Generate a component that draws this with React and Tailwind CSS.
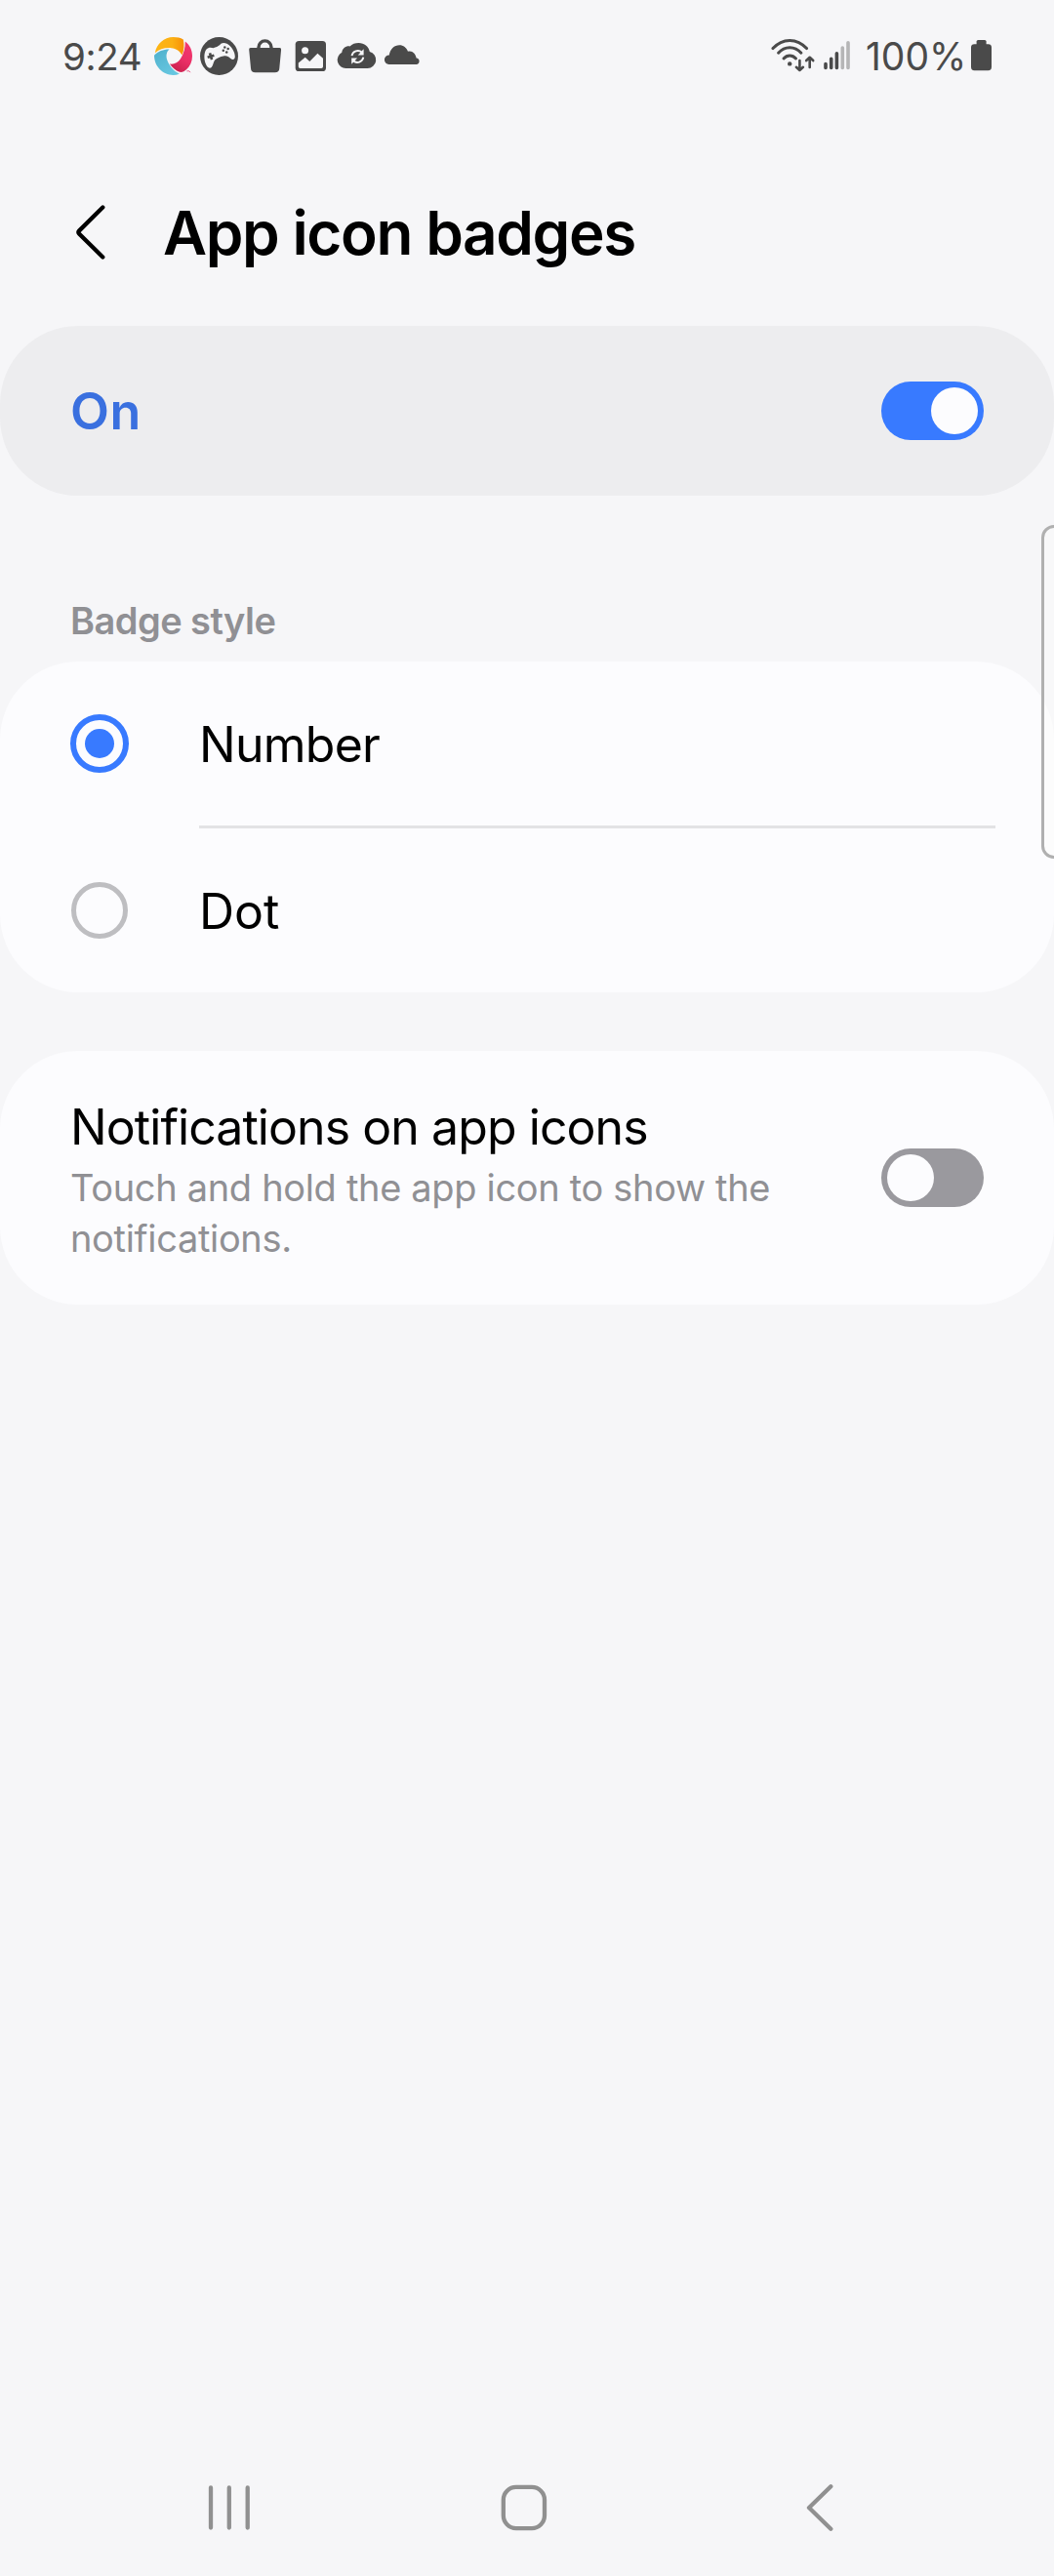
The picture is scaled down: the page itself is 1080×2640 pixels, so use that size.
import React from "react";

const INK = "#4a4a4a";
const BG = "#f6f6f8";

function StatusIcon({ children }) {
  return (
    <svg width="39" height="39" viewBox="0 0 39 39" className="block shrink-0 overflow-visible">
      {children}
    </svg>
  );
}

function Shutter() {
  return (
    <StatusIcon>
      <defs>
        <linearGradient id="sun" x1="0" x2="1">
          <stop offset="0" stopColor="#fdb515" />
          <stop offset="0.6" stopColor="#fbb014" />
          <stop offset="1" stopColor="#f79005" />
        </linearGradient>
        <linearGradient id="rose" x1="0.7" y1="0" x2="0.3" y2="1">
          <stop offset="0" stopColor="#f2386f" />
          <stop offset="0.55" stopColor="#ea2f66" />
          <stop offset="1" stopColor="#c9214e" />
        </linearGradient>
        <linearGradient id="sea" x1="0" y1="0" x2="0.6" y2="1">
          <stop offset="0" stopColor="#4fb0cc" />
          <stop offset="1" stopColor="#66c6e0" />
        </linearGradient>
      </defs>
      <path d="M0.8 16.2C2.5 7 10 0 19.5 0c4 0 7.5 0.8 10.3 2.4C31 8 30.700 13.500 28.400 18.500C26.500 14.500 22.500 11.600 17.500 11.200C11 10.700 5 12.600 0.800 16.200Z" fill="url(#sun)" />
      <path d="M31.800 4.500C36.500 8 39 13.500 39 19.500C39 25 36.800 29.800 33 33.300C31 35.200 28.500 36.300 26 35.800C22 34.500 18.500 31.500 16 27.600C20 28.300 24.200 26.600 26.800 22.600C30.200 17.300 32 11 31.800 4.500Z" fill="url(#rose)" />
      <path d="M0 18.800C4 14.600 9.500 12.400 15.500 12.500C12.700 14.800 11.800 19 13.200 23.300C15.200 29.300 19.500 34.500 25.800 37.700C23.800 38.600 21.700 39 19.500 39C8.800 39 0 30 0 18.800Z" fill="url(#sea)" />
      <path d="M33.400 34.800h2.400l1.200 1.400" stroke="#ec4b7d" strokeWidth="0.9" fill="none" />
    </StatusIcon>
  );
}

function Gamepad() {
  return (
    <StatusIcon>
      <circle cx="19.500" cy="19.500" r="19.500" fill={INK} />
      <path d="M6.500 12.500C8.500 10.200 11.500 10.600 13.500 11.200C16.500 10.600 18.200 9.700 20.300 8.100C21.500 5.800 24.500 5.400 27.500 6.800C31.800 9 35.800 15 35.800 20C35.700 23.200 33.300 23.700 31.300 21.900C28.900 19.600 27 18.700 24 19.400C20.500 20.200 17.700 21 15.400 23.200C13.500 25.300 13.600 28.500 11.900 30.800C10.300 32.700 8 31.700 6.500 29C3.900 24.200 3.500 16.200 6.500 12.500Z" fill={BG} />
      <g transform="rotate(-17 11 19.700)" fill={INK}>
        <rect x="7.500" y="18.500" width="7" height="2.600" />
        <rect x="9.700" y="16.300" width="2.600" height="7" />
      </g>
      <g fill={INK}>
        <circle cx="23.800" cy="13.800" r="1.250" />
        <circle cx="25.300" cy="10.500" r="1.250" />
        <circle cx="28.700" cy="12" r="1.250" />
        <circle cx="27.200" cy="15.400" r="1.250" />
      </g>
    </StatusIcon>
  );
}

function Bag() {
  return (
    <StatusIcon>
      <path d="M13 13V10.500a6.500 6.600 0 0 1 13 0V13" fill="none" stroke={INK} strokeWidth="3.400" />
      <path d="M4.800 10.900H34.500a1.600 1.600 0 0 1 1.600 1.800L34.300 32a4.600 4.600 0 0 1-4.600 4.300H9.600A4.600 4.600 0 0 1 5 32L3.200 12.700a1.600 1.600 0 0 1 1.600-1.800Z" fill={INK} />
    </StatusIcon>
  );
}

function Photo() {
  return (
    <StatusIcon>
      <rect x="3.700" y="4" width="31.300" height="31" rx="3.600" fill={INK} />
      <circle cx="13.600" cy="13.700" r="3.500" fill={BG} />
      <path d="M6.800 26.500L13.700 20.800L18.300 24.900L26.400 16.800L32 21.700V30.200a1.800 1.800 0 0 1-1.800 1.800H8.600a1.800 1.800 0 0 1-1.800-1.800Z" fill={BG} />
    </StatusIcon>
  );
}

function CloudSync() {
  return (
    <StatusIcon>
      <path d="M8.500 32A8.600 8.600 0 0 1 4.300 15.800C4.800 11.300 8.700 8.700 12.600 9.400C14.700 7.200 18 6 21.500 6C27.300 6 31.800 9.500 32.800 14.900A8.700 8.700 0 0 1 30.600 32Z" fill={INK} />
      <g fill="none" stroke={BG} strokeWidth="1.900">
        <path d="M14.500 19.200A6.200 6.200 0 0 1 24.800 15.700" />
        <path d="M26.300 20.700A6.200 6.200 0 0 1 16 24.300" />
      </g>
      <path d="M26.600 12.300V18.400H20.700Z" fill={BG} />
      <path d="M14.200 27.700V21.600H20.100Z" fill={BG} />
    </StatusIcon>
  );
}

function Cloud() {
  return (
    <StatusIcon>
      <path d="M5.500 28A4.600 4.600 0 0 1 5.800 18.500C6.800 12.300 11 8.200 16.300 8.200C20.300 8.200 23.400 10.600 25 14.800C29.300 13.600 32.800 16.800 33.600 21.500A3.300 3.300 0 0 1 34 28Z" fill={INK} />
    </StatusIcon>
  );
}

function Wifi() {
  return (
    <svg width="46" height="39" viewBox="0 0 46 39" className="block shrink-0">
      <g fill="none" stroke={INK} strokeWidth="3" strokeLinecap="round" strokeLinejoin="round">
        <path d="M2 11.600C7 6 12.700 3.400 19.200 3.400S31.500 6 36.500 11.600" />
        <path d="M7.600 16.200C11 12.400 14.900 10.700 19.200 10.700S27.500 12.400 30.900 16.200" />
        <path d="M13 22C14.800 20 16.900 19 19.200 19S23.700 20 25.500 22" />
        <path d="M29.400 24V33.500M25.900 30.800L29.400 34L32.900 30.800" strokeWidth="2.600" />
        <path d="M39.700 31V21M36.200 24L39.700 20.800L43.200 24" strokeWidth="2.600" />
      </g>
      <circle cx="19.200" cy="27.400" r="2.200" fill={INK} />
    </svg>
  );
}

function Signal() {
  return (
    <svg width="28" height="39" viewBox="0 0 28 39" className="block shrink-0">
      <g stroke={INK} strokeWidth="3.600" strokeLinecap="round">
        <path d="M3 27.600V31.400M8.700 22.200V31.400M14.400 16.700V31.400" />
        <path d="M20.300 11V31.400M26 5.700V31.400" stroke="#b5b5b6" />
      </g>
    </svg>
  );
}

function Battery() {
  return (
    <svg width="21" height="39" viewBox="0 0 21 39" className="block shrink-0">
      <rect x="5.600" y="3" width="10" height="7" rx="1.600" fill={INK} />
      <rect x="0" y="7.200" width="21" height="27" rx="3.400" fill={INK} />
    </svg>
  );
}

function Switch({ on }) {
  return (
    <span
      className={
        on
          ? "flex h-[60px] w-[105px] shrink-0 items-center justify-end rounded-full bg-[#387aff] px-[6px]"
          : "flex h-[60px] w-[105px] shrink-0 items-center justify-start rounded-full bg-[#9a999e] px-[6px]"
      }
    >
      <span className="size-12 rounded-full bg-[#fcfcfe]" />
    </span>
  );
}

function Radio({ checked }) {
  return checked ? (
    <span className="flex size-[60px] shrink-0 items-center justify-center rounded-full border-[6px] border-[#387aff]">
      <span className="size-[30px] rounded-full bg-[#387aff]" />
    </span>
  ) : (
    <span className="mx-px size-[58px] shrink-0 rounded-full border-[5px] border-[#bebec1]" />
  );
}

export default function App() {
  return (
    <div className="relative flex h-[2640px] w-[1080px] flex-col overflow-hidden bg-[#f6f6f8] font-['Inter',sans-serif] text-black">
      <div className="flex h-[115px] shrink-0 items-center justify-between pr-16 pl-16 text-[#4a4a4a]">
        <div className="flex items-center">
          <span className="w-[94px] text-[38.500px] leading-[48px] tracking-[-0.400px]">9:24</span>
          <div className="flex gap-2">
            <Shutter />
            <Gamepad />
            <Bag />
            <Photo />
            <CloudSync />
            <Cloud />
          </div>
        </div>
        <div className="flex items-center">
          <Wifi />
          <div className="ml-[7px]">
            <Signal />
          </div>
          <span className="ml-4 w-[108px] text-[39px] leading-[48px]">100%</span>
          <Battery />
        </div>
      </div>

      <header className="flex h-[219px] shrink-0 items-center pt-[27px] pl-[76px]">
        <svg width="34" height="60" viewBox="0 0 34 60" className="block">
          <path d="M29.300 4.500L5 28.600Q3.600 30 5 31.400L29.300 55.500" fill="none" stroke="#000" strokeWidth="4.300" strokeLinecap="round" />
        </svg>
        <h1 className="ml-[57px] pt-[2px] text-[62px] leading-[76px] font-semibold tracking-[-1.400px]">App icon badges</h1>
      </header>

      <section className="flex h-[174px] shrink-0 items-center justify-between rounded-[80px] bg-[#ededef] px-[72px]">
        <span className="pt-[2px] text-[52px] leading-[64px] font-semibold tracking-[0.500px] text-[#3a70df]">On</span>
        <Switch on />
      </section>

      <h2 className="mt-[104px] h-[66px] shrink-0 pl-[72px] text-[38px] leading-[48px] font-semibold tracking-[-0.550px] text-[#909094]">
        Badge style
      </h2>

      <section className="flex shrink-0 flex-col rounded-[80px] bg-[#fcfcfe]">
        <div className="flex h-[168px] items-center px-[72px]">
          <Radio checked />
          <span className="ml-[72px] pt-[2px] text-[50px] leading-[60px] tracking-[-0.750px]">Number</span>
        </div>
        <div className="mr-[60px] ml-[204px] h-[3px] bg-[#e3e3e5]" />
        <div className="flex h-[168px] items-center px-[72px]">
          <Radio />
          <span className="ml-[72px] pt-[2px] text-[50px] leading-[60px]">Dot</span>
        </div>
      </section>

      <section className="mt-[60px] flex h-[260px] shrink-0 items-center justify-between rounded-[80px] bg-[#fcfcfe] px-[72px]">
        <div className="flex flex-col gap-[6px] pt-[6px]">
          <span className="text-[50px] leading-[60px] tracking-[-0.930px]">Notifications on app icons</span>
          <span className="w-[740px] text-[38px] leading-[52px] tracking-[-0.330px] text-[#909094]">
            Touch and hold the app icon to show the notifications.
          </span>
        </div>
        <Switch />
      </section>

      <nav className="mt-auto flex h-[140px] shrink-0 items-center gap-[254px] pl-[211px]">
        <svg width="48" height="48" viewBox="0 0 48 48">
          <path d="M5 3.500V44.500M23.800 3.500V44.500M42.700 3.500V44.500" stroke="#909090" strokeWidth="4.300" strokeLinecap="round" />
        </svg>
        <svg width="48" height="48" viewBox="0 0 48 48">
          <rect x="2.800" y="2.900" width="42.200" height="42.200" rx="13" fill="none" stroke="#909090" strokeWidth="4.300" />
        </svg>
        <svg width="48" height="48" viewBox="0 0 48 48">
          <path d="M36.300 2.300L14 24L36.300 45.700" fill="none" stroke="#909090" strokeWidth="4.300" strokeLinecap="round" strokeLinejoin="round" />
        </svg>
      </nav>

      <div className="absolute top-[538px] left-[1067px] h-[342px] w-[30px] rounded-[13px] border-[3px] border-[#b0b0b0] bg-[#fcfcfa]/40" />
    </div>
  );
}
